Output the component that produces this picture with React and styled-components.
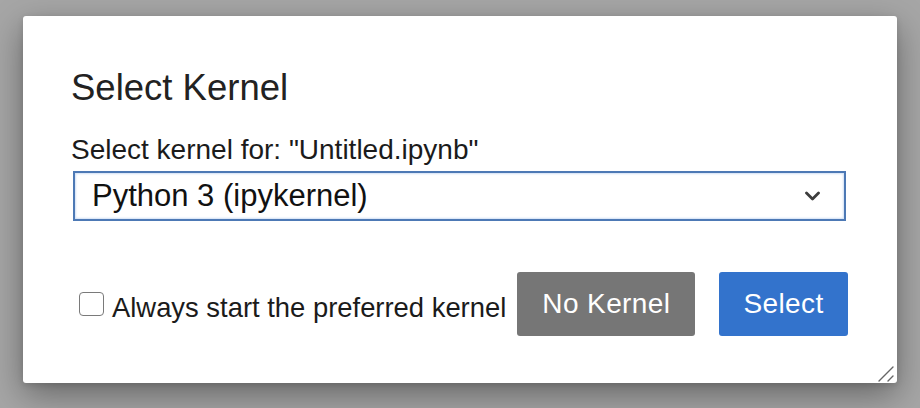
import React from 'react'
import styled, { createGlobalStyle } from 'styled-components'

const GlobalStyle = createGlobalStyle`
  html, body {
    margin: 0;
    padding: 0;
    background: #a6a6a6;
  }
  * {
    box-sizing: border-box;
  }
`

const Backdrop = styled.div`
  width: 920px;
  height: 408px;
  padding: 16px 0 0 23px;
  background: #a6a6a6;
  font-family: "Liberation Sans", Arial, sans-serif;
  overflow: hidden;
`

const Dialog = styled.div`
  position: relative;
  display: flex;
  flex-direction: column;
  width: 874px;
  height: 367px;
  padding: 51px 49px 0 48px;
  background: #fff;
  border-radius: 3px;
  box-shadow: 0 12px 34px rgba(0, 0, 0, 0.38), 0 2px 6px rgba(0, 0, 0, 0.12);
`

const Title = styled.h1`
  margin: 0;
  font-size: 36.5px;
  line-height: 42px;
  font-weight: 400;
  color: #222;
`

const FieldLabel = styled.label`
  margin-top: 25px;
  font-size: 28px;
  line-height: 32px;
  color: #1b1b1b;
`

const SelectBox = styled.div`
  display: flex;
  align-items: center;
  justify-content: space-between;
  height: 50px;
  margin: 5px 2px 0 2px;
  padding: 0 24px 0 17px;
  border: 2px solid #4d79b5;
  box-shadow: inset 0 0 2px 1px rgba(120, 165, 225, 0.35);
  font-size: 31px;
  line-height: 34px;
  color: #111;
`

const Footer = styled.div`
  display: flex;
  align-items: center;
  margin-top: 51px;
  height: 64px;
`

const CheckRow = styled.label`
  display: flex;
  align-items: center;
  gap: 8px;
  margin-left: 8px;
  margin-right: 11px;
`

const CheckSquare = styled.span`
  width: 25px;
  height: 24px;
  border: 1.5px solid #7a7a7a;
  border-radius: 4px;
  background: #fff;
`

const CheckText = styled.span`
  padding-top: 7px;
  font-size: 27.4px;
  line-height: 32px;
  color: #1b1b1b;
  white-space: nowrap;
`

const Button = styled.button`
  flex-shrink: 0;
  height: 64px;
  padding: 0 ${(p) => (p.$primary ? '24px' : '25px')};
  border: none;
  border-radius: 3px;
  background: ${(p) => (p.$primary ? '#3373cc' : '#767676')};
  color: #fff;
  font-family: inherit;
  font-size: 28px;
  line-height: 32px;
  letter-spacing: 0.4px;
  white-space: nowrap;
  & + & {
    margin-left: 24px;
  }
`

const ResizeGrip = styled.svg`
  position: absolute;
  right: 3px;
  bottom: 1px;
`

const Chevron = () => (
  <svg width="15" height="10" viewBox="0 0 15 10">
    <path d="M1.5 2 L7.5 8 L13.5 2" fill="none" stroke="#3d3d3d" strokeWidth="2.8" strokeLinecap="round" strokeLinejoin="round" />
  </svg>
)

const App = () => {
  return (
    <Backdrop>
      <GlobalStyle />
      <Dialog>
        <Title>Select Kernel</Title>
        <FieldLabel>Select kernel for: "Untitled.ipynb"</FieldLabel>
        <SelectBox>
          <span>Python 3 (ipykernel)</span>
          <Chevron />
        </SelectBox>
        <Footer>
          <CheckRow>
            <CheckSquare />
            <CheckText>Always start the preferred kernel</CheckText>
          </CheckRow>
          <Button>No Kernel</Button>
          <Button $primary>Select</Button>
        </Footer>
        <ResizeGrip width="16" height="16" viewBox="0 0 16 16">
          <path d="M1 15 L15 1 M10 15 L15 10" stroke="#666" strokeWidth="1.4" strokeLinecap="round" />
        </ResizeGrip>
      </Dialog>
    </Backdrop>
  )
}

export default App
